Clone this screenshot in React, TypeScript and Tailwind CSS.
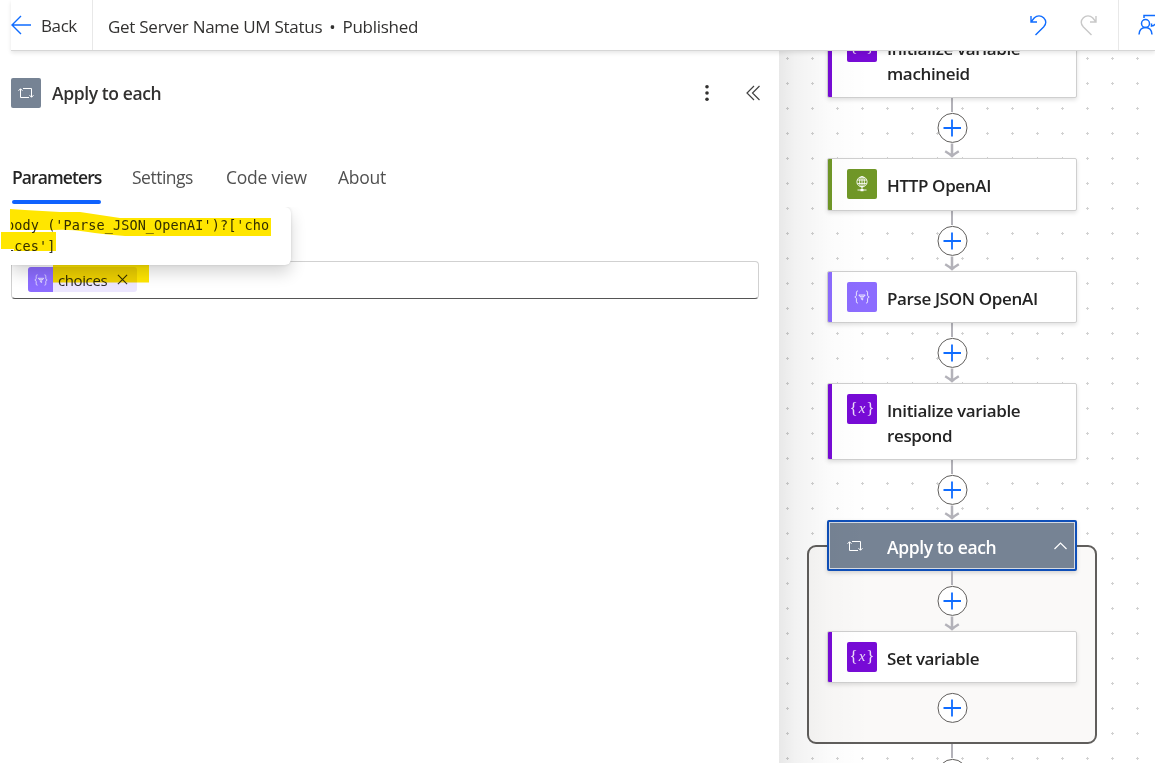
import React from "react";

const FONT = "font-['Open_Sans','Noto_Sans',sans-serif]";

function LoopIcon({ className }: { className: string }) {
  return (
    <svg className={className} viewBox="0 0 16 12" fill="none" stroke="currentColor" strokeWidth="1">
      <path d="M5 1.5H13.5V10M11.5 8.2L13.5 10.3L15.5 8.2M11 10.5H2.5V2M0.5 3.8L2.5 1.7L4.5 3.8" />
    </svg>
  );
}

function VarIcon() {
  return (
    <span className="flex -translate-y-px items-center gap-px whitespace-nowrap font-['Liberation_Serif',serif] text-[17px] leading-none text-white/85">
      <span>{"{"}</span><i className="text-[15px]">x</i><span>{"}"}</span>
    </span>
  );
}

function ParseIcon({ className }: { className: string }) {
  return (
    <svg className={className} viewBox="0 0 16 14" fill="none" stroke="currentColor" strokeWidth="1">
      <path d="M4 1C2.4 1 2.4 1.8 2.4 3V5C2.4 6.3 1.8 6.8 .8 7C1.8 7.2 2.4 7.7 2.4 9V11C2.4 12.3 2.4 13 4 13M12 1C13.6 1 13.6 1.8 13.6 3V5C13.6 6.3 14.2 6.8 15.2 7C14.2 7.2 13.6 7.7 13.6 9V11C13.6 12.3 13.6 13 12 13" />
      <path d="M4.8 5H11.2L8.7 7.8V10L7.3 9.2V7.8ZM6.2 6.3H9.8" />
    </svg>
  );
}

function GlobeIcon() {
  return (
    <svg className="h-4 w-3" viewBox="0 0 12 16" fill="none" stroke="white" strokeWidth="0.9">
      <circle cx="6" cy="5.8" r="5.1" />
      <ellipse cx="6" cy="5.8" rx="2.4" ry="5.1" />
      <path d="M1.3 4H10.7M1.3 7.6H10.7M6 .7V13M1.5 14H10.5" />
      <path d="M4.5 13H7.5V15.2H4.5Z" fill="white" stroke="none" />
    </svg>
  );
}

function Add() {
  return (
    <svg className="block h-[31px] w-[31px] shrink-0" viewBox="0 0 31 31" fill="none">
      <circle cx="15.5" cy="15.9" r="14.5" fill="white" stroke="#605e5c" />
      <path d="M6.500 16H24M15 7.500V24.500" stroke="#0f6cff" strokeWidth="1.8" />
    </svg>
  );
}

function Connector({ className = "h-[60px]" }: { className?: string }) {
  return (
    <div className={`flex w-[250px] shrink-0 flex-col items-center ${className}`}>
      <div className="w-[2.5px] grow bg-[#b3b2b9]" />
      <Add />
      <svg className="block h-[15px] w-[16px] shrink-0" viewBox="0 0 16 15" fill="none" stroke="#b3b2b9" strokeWidth="2.5">
        <path d="M8 0.400V13M1.2 8.200Q5 10.500 8 13Q11 10.500 14.8 8.200" />
      </svg>
    </div>
  );
}

function Card({ bar, icon, iconBg, size, children }: { bar: string; icon: React.ReactNode; iconBg: string; size: string; children: React.ReactNode }) {
  return (
    <div className={`relative flex w-[250px] shrink-0 overflow-hidden rounded-[2px] border border-[#cfcfcf] bg-white pl-[19px] shadow-[0_2px_4px_rgba(0,0,0,0.12)] ${size}`}>
      <div className={`absolute -inset-y-px -left-px w-[5px] ${bar}`} />
      <div className={`mt-[10px] flex h-[30px] w-[30px] shrink-0 items-center justify-center rounded-[2px] ${iconBg}`}>{icon}</div>
      <div className="ml-[10px] mt-[14px] whitespace-nowrap text-[17px] font-semibold leading-[25px] tracking-[-0.35px] text-[#242424]">{children}</div>
    </div>
  );
}

export default function App() {
  return (
    <div className={`relative flex h-[763px] w-[1155px] flex-col overflow-hidden bg-white text-[#323130] ${FONT}`}>
      <header className="relative z-20 ml-[11px] flex h-[51px] shrink-0 border-b border-[#d6d6d6] bg-white shadow-[0_2px_4px_rgba(0,0,0,0.1)]">
        <div className="flex w-[82px] items-center border-r border-[#e8e8e8]">
          <svg className="h-5 w-5" viewBox="0 0 20 20" fill="none" stroke="#0f6cff" strokeWidth="1.4"><path d="M20 10H1M10 1L1 10L10 19" /></svg>
          <span className="ml-[10px] mt-px text-[17px] tracking-[-0.4px]">Back</span>
        </div>
        <div className="ml-[15px] mt-[14px] flex whitespace-nowrap text-[17px] leading-[25px] tracking-[-0.27px]">
          <span>Get Server Name UM Status</span>
          <span className="mx-[7px]">•</span>
          <span>Published</span>
        </div>
        <div className="ml-auto flex items-center">
          <svg className="h-[21px] w-[17px]" viewBox="0 0 17 21" fill="none" stroke="#0f6cff" strokeWidth="1.4"><path d="M1 1V7H7M1 7L4.4 2.7C7 .2 11 .2 13.6 2.7C16.5 5.5 16.5 9 13.6 12L5.5 20" /></svg>
          <svg className="ml-[33px] h-[21px] w-[17px]" viewBox="0 0 17 21" fill="none" stroke="#c8c8c8" strokeWidth="1.4"><path d="M16 1V7H10M16 7L12.6 2.7C10 .2 6 .2 3.4 2.7C.5 5.5 .5 9 3.4 12L11.5 20" /></svg>
          <div className="ml-[21px] h-full w-[37px] overflow-hidden border-l border-[#e8e8e8] pl-[19px] pt-[14px]">
            <svg className="h-[21px] w-[20px]" viewBox="0 0 20 21" fill="none" stroke="#0f6cff" strokeWidth="1.5"><path d="M6 4V1.500H20M1 20.500Q1.500 13.500 7.5 13.500Q13.500 13.500 14 20.500M13.500 9.500V12L15.500 11.500L20 8" /><circle cx="7.5" cy="9.500" r="4" /></svg>
          </div>
        </div>
      </header>

      <div className="flex min-h-0 grow">
        <section className="relative z-10 ml-[11px] w-[768px] shrink-0 bg-white">
          <div className="flex items-center pt-[27px]">
            <div className="flex h-[30px] w-[30px] items-center justify-center rounded-[2px] bg-[#768394] text-white"><LoopIcon className="h-3 w-4" /></div>
            <h1 className="ml-[11px] whitespace-nowrap text-[17.5px] font-semibold tracking-[-0.4px]">Apply to each</h1>
            <svg className="ml-auto h-[18px] w-[6px]" viewBox="0 0 6 18" fill="#323130"><circle cx="3" cy="2.7" r="1.8" /><circle cx="3" cy="9" r="1.8" /><circle cx="3" cy="15.3" r="1.8" /></svg>
            <svg className="ml-[36px] mr-[19px] h-4 w-[14px]" viewBox="0 0 14 16" fill="none" stroke="#424242" strokeWidth="1.2"><path d="M8 1L1 8L8 15M13.5 1L6.5 8L13.5 15" /></svg>
          </div>
          <nav className="mt-[56px] flex h-[40px] whitespace-nowrap pl-px text-[17.5px] leading-[26px] tracking-[-0.25px] text-[#505050]">
            <div className="flex w-[89px] flex-col justify-between font-semibold tracking-[-0.9px] text-[#242424]">
              <span>Parameters</span>
              <span className="h-1 rounded-[2px] bg-[#0f62fe]" />
            </div>
            <div className="ml-[31px] w-[94px] tracking-[-0.5px]">Settings</div>
            <div className="w-[112px]">Code view</div>
            <div>About</div>
          </nav>
          <div className="relative mt-[57px] flex h-[38px] w-[748px] items-start rounded-[4px] border border-[#d1d1d1] border-b-[#555] pl-[16px] pt-[5px]">
            <div className="flex h-[25px] w-[109px] items-center rounded-[3px] bg-[#ece6ff]">
              <div className="flex h-[25px] w-[25px] items-center justify-center rounded-l-[3px] bg-[#8c6cff] text-white/80"><ParseIcon className="h-3 w-[14px]" /></div>
              <span className="ml-[5px] w-[50px] text-[15px] leading-[24px] tracking-[-0.4px]">choices</span>
              <svg className="ml-[9px] h-[11px] w-[11px]" viewBox="0 0 12 12" stroke="#323130" strokeWidth="1.2"><path d="M1 1L11 11M11 1L1 11" /></svg>
            </div>
          </div>
          <div className="absolute inset-x-0 top-[156px] h-[100px] overflow-hidden">
            <div className="h-[58px] w-[280px] rounded-r-[6px] bg-white pt-[8px] shadow-[0_8px_16px_rgba(0,0,0,0.16),0_0_3px_rgba(0,0,0,0.12)]">
              <pre className="-ml-[5px] font-['DejaVu_Sans_Mono',monospace] text-[13.5px] leading-[21px] tracking-[0.1px] text-[#333]">{"body ('Parse_JSON_OpenAI')?['cho\nices']"}</pre>
            </div>
          </div>
        </section>

        <main className="relative min-w-0 grow overflow-hidden bg-[radial-gradient(circle,#d2d2d2_1px,transparent_1.3px)] bg-[length:25px_25px] bg-[position:-4px_-5px]">
          <div className="-mt-[30px] ml-[48px] flex w-[250px] flex-col">
            <Card bar="bg-[#770bd6]" iconBg="bg-[#770bd6]" icon={<VarIcon />} size="h-[77px]">Initialize variable<br />machineid</Card>
            <Connector />
            <Card bar="bg-[#709727]" iconBg="bg-[#709727]" icon={<GlobeIcon />} size="h-[53px]">HTTP OpenAI</Card>
            <Connector />
            <Card bar="bg-[#8c6cff]" iconBg="bg-[#8c6cff]" icon={<ParseIcon className="h-[14px] w-4 text-white/80" />} size="h-[52px]">Parse JSON OpenAI</Card>
            <Connector />
            <Card bar="bg-[#770bd6]" iconBg="bg-[#770bd6]" icon={<VarIcon />} size="h-[77px]">Initialize variable<br />respond</Card>
            <Connector />
            <div className="relative flex shrink-0 flex-col">
              <div className="absolute -left-[20px] -right-[20px] bottom-0 top-[25px] rounded-[9px] border-2 border-[#605e5c] bg-[#faf9f8]" />
              <div className="relative flex h-[51px] items-center rounded-[2px] border-2 border-[#0f4fb8] bg-[#768394] pl-[18px] pr-[8px] text-white shadow-[inset_0_0_0_1px_#d5dae2,0_2px_4px_rgba(0,0,0,0.15)]">
                <LoopIcon className="h-3 w-4" />
                <span className="ml-[24px] mt-[4px] whitespace-nowrap text-[17.5px] font-semibold tracking-[-0.4px]">Apply to each</span>
                <svg className="ml-auto h-[8px] w-[13px]" viewBox="0 0 13 8" fill="none" stroke="white" strokeWidth="1.2"><path d="M.5 7L6.5 1L12.5 7" /></svg>
              </div>
              <div className="relative flex flex-col">
                <Connector />
                <Card bar="bg-[#770bd6]" iconBg="bg-[#770bd6]" icon={<VarIcon />} size="h-[52px]">Set variable</Card>
                <div className="flex h-[61px] justify-center pt-[9px]"><Add /></div>
              </div>
            </div>
            <div className="mx-auto h-[14px] w-[2.5px] bg-[#b3b2b9]" />
            <div className="mx-auto"><Add /></div>
          </div>
          <div className="pointer-events-none absolute inset-y-0 left-0 w-[90px] bg-[linear-gradient(to_right,rgba(0,0,0,0.09),rgba(0,0,0,0.05)_18%,rgba(0,0,0,0.015)_55%,transparent)]" />
        </main>
      </div>

      <svg className="pointer-events-none absolute left-0 top-[200px] z-30 h-[90px] w-[280px] mix-blend-multiply" viewBox="0 0 280 90" fill="#ffe600">
        <path d="M10 9L25 10L60 12L80 12Q100 15 120 18H271V36H125Q100 34 88 32Q70 29 54 30H10Z" />
        <path d="M1 32H56V51H14V49H1Z" />
        <path d="M53 65H149V82.500H53Z" />
      </svg>
    </div>
  );
}
